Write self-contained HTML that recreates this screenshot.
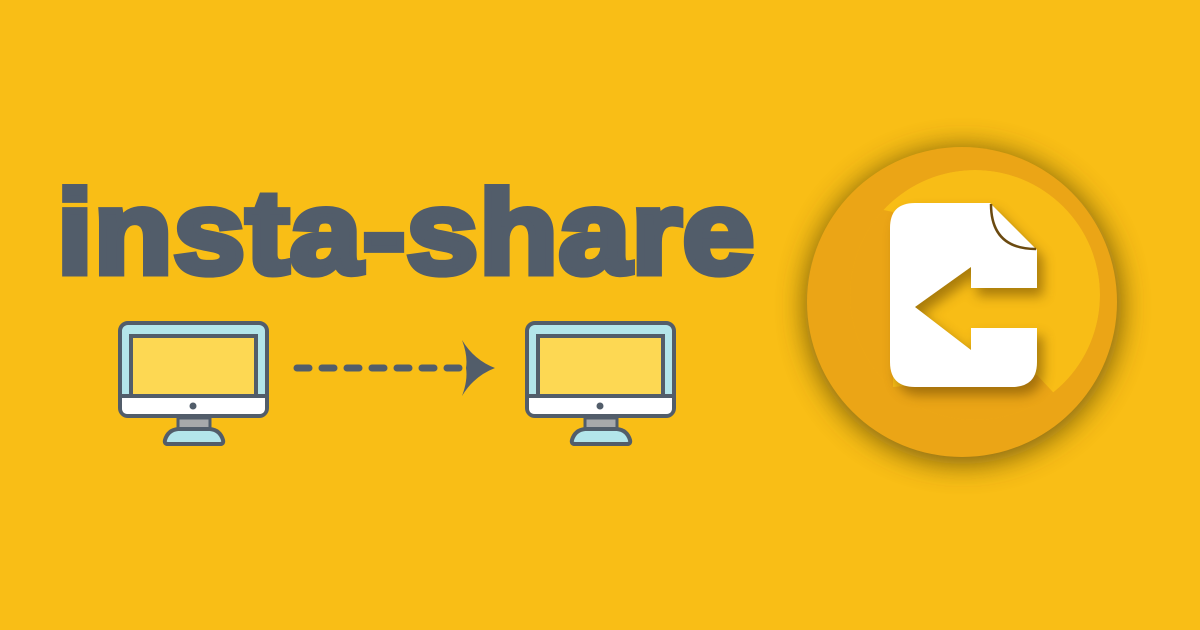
<!DOCTYPE html>
<html><head><meta charset="utf-8"><style>
html,body{margin:0;padding:0}
body{width:1200px;height:630px;background:#F9BE16;position:relative;overflow:hidden;font-family:"Liberation Sans",sans-serif}
.t{position:absolute;left:57px;top:174px;font-size:118px;font-weight:bold;color:#525D6A;-webkit-text-stroke:7px #525D6A;white-space:nowrap;transform-origin:0 0;transform:scaleX(1.09);letter-spacing:1px;line-height:1}
svg{position:absolute;left:0;top:0}
</style></head><body>
<div class="t">insta-share</div>
<svg width="1200" height="630" viewBox="0 0 1200 630">
<defs>
<g id="mon">
<rect x="0" y="0" width="147" height="93" rx="8" fill="#B3E5EA" stroke="#525D6A" stroke-width="4"/>
<path d="M2,73 H145 V85 Q145,91 139,91 H8 Q2,91 2,85 Z" fill="#fff"/>
<line x1="2" y1="73" x2="145" y2="73" stroke="#525D6A" stroke-width="4"/>
<rect x="11" y="13" width="125" height="60" fill="#FDD853" stroke="#525D6A" stroke-width="4"/>
<circle cx="73" cy="83" r="3.5" fill="#525D6A"/>
<rect x="58" y="95" width="32" height="11" fill="#A7A9AB" stroke="#525D6A" stroke-width="3"/>
<path d="M48,121 Q44,121 45,117 Q48,107 58,106 H90 Q100,107 103,117 Q104,121 100,121 Z" fill="#B3E5EA" stroke="#525D6A" stroke-width="4"/>
</g>
<filter id="sh" x="-30%" y="-30%" width="160%" height="160%"><feGaussianBlur stdDeviation="14"/></filter>
<filter id="ish" x="-30%" y="-30%" width="160%" height="160%"><feGaussianBlur stdDeviation="6"/></filter>
<clipPath id="cc"><circle cx="975" cy="295" r="125"/></clipPath>
</defs>
<use href="#mon" x="120" y="323"/>
<use href="#mon" x="527" y="323"/>
<line x1="297" y1="368" x2="470" y2="368" stroke="#525D6A" stroke-width="7" stroke-linecap="round" stroke-dasharray="12,13"/>
<path d="M462,340 Q474,360 495,368 Q474,376 462,396 Q468,380 466,368 Q468,356 462,340 Z" fill="#525D6A"/>
<circle cx="963" cy="306" r="158" fill="#4a3a08" opacity="0.7" filter="url(#sh)"/>
<circle cx="962" cy="302" r="155" fill="#EBA516"/>
<g clip-path="url(#cc)">
<circle cx="975" cy="295" r="125" fill="#F8BD16"/>
<polygon points="860,205 893,212 893,387 1037,375 1065,405 900,480 780,480 780,205" fill="#EBA516"/>
</g>
<path d="M915,203 H990 L1037,250 V288 H971 V267 L915,307 L971,350 V328 H1037 V362 Q1037,387 1012,387 H915 Q890,387 890,362 V228 Q890,203 915,203 Z" fill="#5a3a00" opacity="0.5" transform="translate(6,8)" filter="url(#ish)"/>
<path d="M915,203 H990 L1037,250 V288 H971 V267 L915,307 L971,350 V328 H1037 V362 Q1037,387 1012,387 H915 Q890,387 890,362 V228 Q890,203 915,203 Z" fill="#fff"/>
<path d="M991,204 Q991,249 1036,249" fill="none" stroke="#6b4a10" stroke-width="2.5"/>
</svg>
</body></html>
